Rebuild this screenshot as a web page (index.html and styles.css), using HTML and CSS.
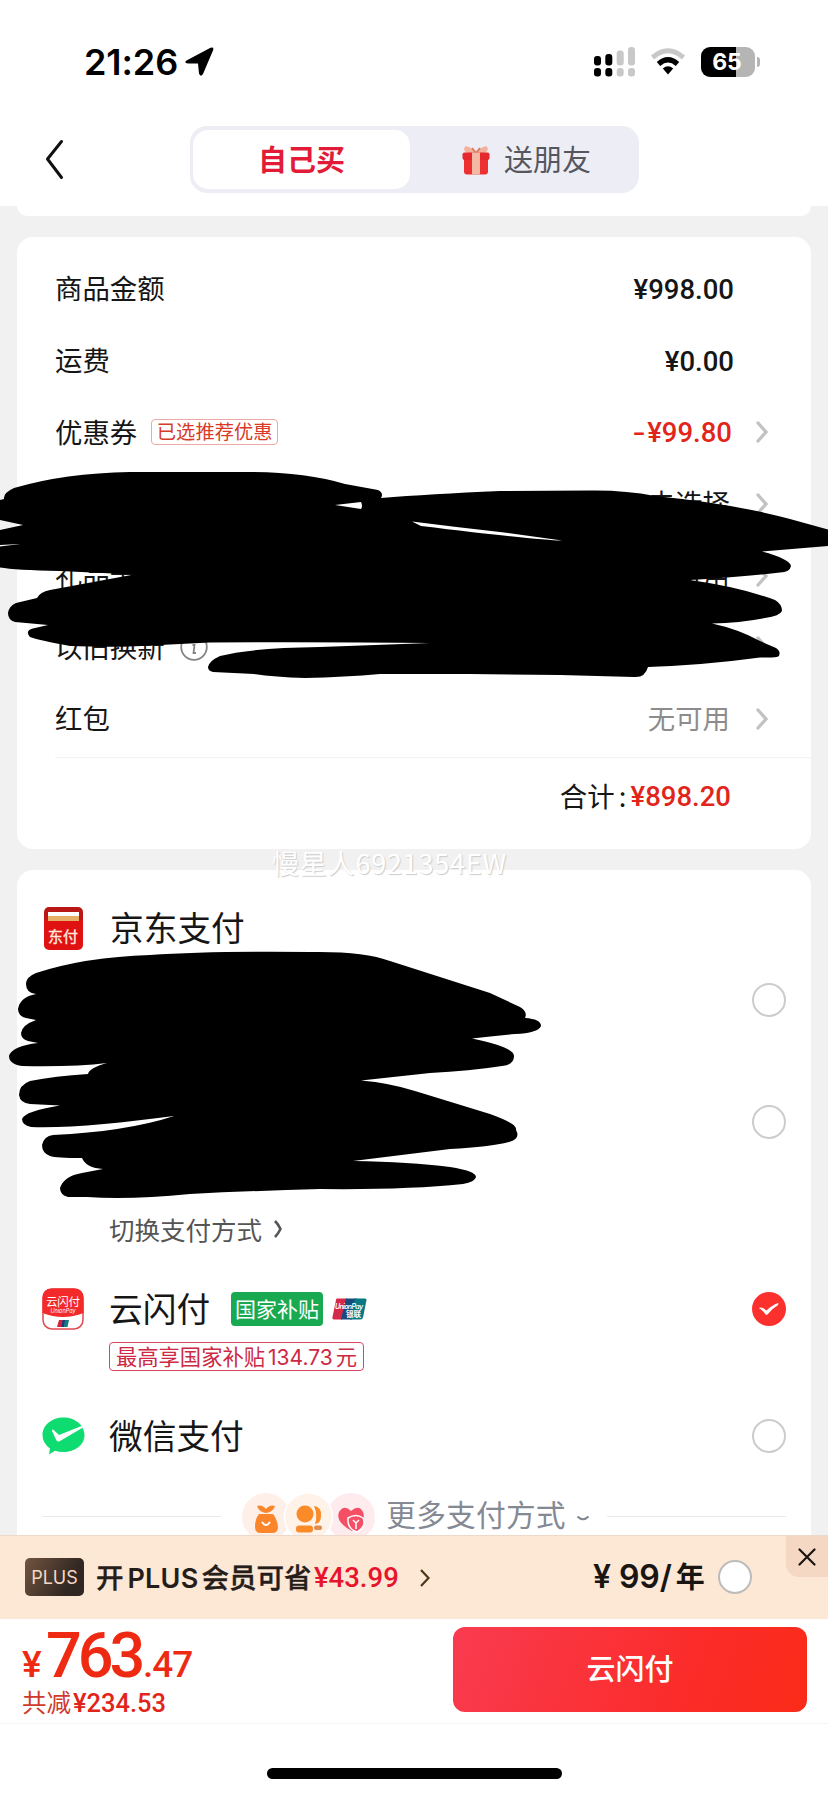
FILE: index.html
```html
<!DOCTYPE html>
<html lang="zh-CN">
<head>
<meta charset="utf-8">
<title>确认订单</title>
<link rel="stylesheet" href="styles.css">
</head>
<body>
<div class="screen">
  <header class="header">
    <div class="status">
      <span class="time">21:26</span>
      <svg class="locate" width="29" height="29" viewBox="0 0 29 29"><path d="M1.500 13.500 25.500.8Q29-.5 28.200 3L18 27Q15.500 30.500 14 26.500L13 16.500 3 16.500Q-1.500 16 1.500 13.500Z"/></svg>
      <svg class="signal" width="42" height="30" viewBox="0 0 42 30">
        <g><rect x="0" y="9" width="7" height="9.500" rx="3"/><rect x="11.300" y="7" width="7" height="11.500" rx="3"/><rect x="0" y="21" width="7" height="8.500" rx="3"/><rect x="11.300" y="21" width="7" height="8.500" rx="3"/></g>
        <g fill="#c8c8c8"><rect x="22.700" y="3.500" width="7" height="15" rx="3"/><rect x="34" y="0" width="7" height="18.500" rx="3"/><rect x="22.700" y="21" width="7" height="8.500" rx="3"/><rect x="34" y="21" width="7" height="8.500" rx="3"/></g>
      </svg>
      <svg class="wifi" width="36" height="28" viewBox="0 0 36 28">
        <path d="M2.500 9.500Q18-4 33.500 9.500" fill="none" stroke="#c8c8c8" stroke-width="5"/>
        <path d="M8.500 16Q18 7.500 27.500 16" fill="none" stroke="#000" stroke-width="5.200"/>
        <path d="M12.800 20.500Q18 16 23.200 20.500L18 26.500Z"/>
      </svg>
      <div class="battery"><span>65</span></div><i class="nub"></i>
    </div>
    <nav class="nav">
      <svg class="back" width="19" height="42" viewBox="0 0 19 42"><path d="M16.500 2.500 2.500 20 16.500 38.500" fill="none" stroke="#111" stroke-width="3" stroke-linecap="round" stroke-linejoin="round"/></svg>
      <div class="segment">
        <div class="tab tab-on"><span>自己买</span></div>
        <div class="tab">
          <svg width="28" height="30" viewBox="0 0 28 30"><path d="M13 9C2 9 0 4 4 1 7 2 12 4 14 8 16 4 21 2 24 1 28 4 26 9 15 9Z" fill="#f3b09a"/><path d="M10 3 14 8 18 3" fill="none" stroke="#d97b63" stroke-width="2"/><rect x="2" y="12" width="24" height="17.500" rx="3" fill="#ed3032"/><rect x="0.500" y="7.500" width="27" height="7.500" rx="2" fill="#e4282e"/><path d="M10 7.500h8v22h-8z" fill="#f5b9a3"/></svg>
          <span>送朋友</span>
        </div>
      </div>
    </nav>
  </header>

  <main class="content">
    <div class="card-tail"></div>
    <section class="card bill">
      <div class="row"><span>商品金额</span><b class="money">¥998.00</b></div>
      <div class="row"><span>运费</span><b class="money">¥0.00</b></div>
      <div class="row"><span>优惠券</span><em class="pick">已选推荐优惠</em><b class="money red"><span class="minus">-</span>¥99.80</b><svg class="chev" viewBox="0 0 12 22"><path d="M2 2 10 11 2 20"/></svg></div>
      <div class="row"><span class="value">去选择</span><svg class="chev" viewBox="0 0 12 22"><path d="M2 2 10 11 2 20"/></svg></div>
      <div class="row"><span>礼品卡</span><span class="value">无可用</span><svg class="chev" viewBox="0 0 12 22"><path d="M2 2 10 11 2 20"/></svg></div>
      <div class="row"><span>以旧换新</span><svg class="info" width="28" height="28" viewBox="0 0 28 28"><circle cx="14" cy="14" r="12.800"/><path d="M14 7v2M12.500 12h2l-1 8h2.500"/></svg><svg class="chev" viewBox="0 0 12 22"><path d="M2 2 10 11 2 20"/></svg></div>
      <div class="row"><span>红包</span><span class="value muted">无可用</span><svg class="chev" viewBox="0 0 12 22"><path d="M2 2 10 11 2 20"/></svg></div>
      <div class="total"><span>合计</span><span class="colon">:</span><b class="money red">¥898.20</b></div>
    </section>

    <section class="card pay">
      <div class="method m-jd">
        <div class="jd-icon"><i></i><span>东付</span></div>
        <span class="name">京东支付</span>
      </div>
      <div class="method m-a"><i class="radio"></i></div>
      <div class="method m-b"><i class="radio"></i></div>
      <div class="switch">切换支付方式<svg width="10" height="20" viewBox="0 0 10 20"><path d="M2 2Q5 5 7.500 10 5 15 2 18" fill="none" stroke="#555" stroke-width="2.600"/></svg></div>
      <div class="method m-union">
        <svg class="app" width="42" height="42" viewBox="0 0 42 42">
          <rect x="1" y="1" width="40" height="40" rx="9" fill="#fff" stroke="#e34a50" stroke-width="1.500"/>
          <path d="M.5 25V10Q.5.5 10 .500H32Q41.500.5 41.500 10V25Q21 33 .500 25Z" fill="#f22a29"/>
          <text x="21" y="17.500" text-anchor="middle" font-size="11.500" fill="#fff" textLength="34">云闪付</text>
          <text class="latin" x="21" y="25" text-anchor="middle" font-size="5.500" font-style="italic" fill="#fff">UnionPay</text>
          <path d="M17 32h4l-1 7h-5z" fill="#d8203c"/><path d="M20.500 32h3l-1 7h-3z" fill="#173d78"/><path d="M23 32h4l-1.500 7h-3.500z" fill="#147b83"/>
        </svg>
        <span class="name">云闪付</span>
        <span class="gov">国家补贴</span>
        <svg class="up" width="35" height="22" viewBox="0 0 35 22">
          <path d="M5 .5H15L10 21.500H2Q0 21.500.5 19L4 2Q4 .5 5 .500Z" fill="#d5294a"/><path d="M14 .500H25L20 21.500H9Z" fill="#184b7c"/><path d="M23 .5H33Q35 .5 34.500 2L31 19.500Q30.500 21.500 28.500 21.500H18Z" fill="#087983"/>
          <text class="latin" x="3" y="10.500" font-size="7" font-weight="600" font-style="italic" fill="#fff" textLength="28">UnionPay</text><text x="14" y="18.500" font-size="7.500" font-weight="700" fill="#fff">银联</text>
        </svg>
        <svg class="checked" width="34" height="34" viewBox="0 0 34 34"><circle cx="17" cy="17" r="17" fill="#fc302d"/><path d="M7 16Q8 15 11 16L14.500 18.500Q20 13 26 11 27 11.500 25.500 13.500 20 16.500 15.500 22.500L14 23Q11 18.500 7 16Z" fill="#fff"/></svg>
      </div>
      <div class="subsidy">最高享国家补贴<span>134.73</span>元</div>
      <div class="method m-wx">
        <svg class="app" width="43" height="38" viewBox="0 0 43 38"><path d="M21.500.5C33 .5 42.500 8 42.500 18S33 35 21.500 35Q17 35 13 33.800L7 37.500 8 31.500Q.5 26 .500 18C.5 8 10 .5 21.500.500Z" fill="#0edc70"/><path d="M11 12.500 17 18 42 8Q43 9 41 10.500L18 24Q15 25.500 14 22.500L10 14Q10 12 11 12.500Z" fill="#fff"/></svg>
        <span class="name">微信支付</span><i class="radio"></i>
      </div>
      <div class="more">
        <i class="line"></i>
        <svg class="trio" width="134" height="50" viewBox="0 0 134 50">
          <circle cx="25" cy="25" r="24" fill="#fef0e8"/>
          <circle cx="110" cy="25" r="24" fill="#fdebee"/>
          <circle cx="67.500" cy="25" r="24" fill="#fff2e8" stroke="#fff" stroke-width="1.500"/>
          <path d="M16 14q5-2 9 3 4-5 9-3-2 6-9 7-7-1-9-7ZM18 22h14q4 5 5 13 0 6-6 6H20q-6 0-6-6 0-8 4-13Z" fill="#fa852b"/><path d="M21 30q4 6 8 0" fill="none" stroke="#fff" stroke-width="2"/>
          <circle cx="64" cy="22" r="8.500" fill="#fb8a28"/><path d="M73 14q8 1 7 10 0 7-6 8 3-9-1-18Z" fill="#fb8a28"/><rect x="55" y="33.500" width="17" height="7" rx="3" fill="#fb8a28"/><rect x="73" y="33.500" width="8" height="4.500" rx="2" fill="#e48b50"/>
          <path d="M111 39Q94 30 98 20 103 12 110 19 118 12 122 20 126 30 111 39Z" fill="#f54f66"/><path d="M107 26q8-5 15 0 4 8-6 14-10-3-9-14Z" fill="#f54f66" stroke="#fff" stroke-width="1.500"/><path d="m112 28 3 3 3-3M115 31v6" fill="none" stroke="#fff" stroke-width="1.500"/>
        </svg>
        <span class="more-text">更多支付方式</span>
        <svg class="down" width="14" height="8" viewBox="0 0 14 8"><path d="M1.500 1.500Q7 7 12.500 1.500" fill="none" stroke="#858993" stroke-width="2.200"/></svg>
        <i class="line"></i>
      </div>
    </section>
  </main>

  <footer class="footer">
    <div class="plus">
      <span class="plus-badge">PLUS</span>
      <span class="plus-text">开<span>PLUS</span>会员可省</span><b class="save">¥43.99</b>
      <svg class="plus-chev" width="12" height="20" viewBox="0 0 12 20"><path d="M2 2 9.500 10 2 18" fill="none" stroke="#513719" stroke-width="2.200"/></svg>
      <span class="year">¥ 99/<span>年</span></span><i class="radio"></i>
      <div class="close"><svg width="18" height="18" viewBox="0 0 18 18"><path d="M1.500 1.500 16.500 16.500M16.500 1.500 1.500 16.500" stroke="#1b1511" stroke-width="2.200" stroke-linecap="round"/></svg></div>
    </div>
    <div class="checkout">
      <div class="sum">
        <div class="price"><small class="yen">¥</small><b>763</b><small class="cents">.47</small></div>
        <div class="saved">共减<b>¥234.53</b></div>
      </div>
      <button class="submit">云闪付</button>
    </div>
    <div class="home"><i></i></div>
  </footer>

  <div class="watermark">慢星人6921354EW</div>
  <svg class="ink" width="828" height="1796" viewBox="0 0 828 1796">
    <path d="M0 500 4 499Q3 493 14 488Q65 473 130 472H250Q305 472 345 484L378 490Q384 493 381 498Q430 494 500 491L590 490.500Q625 490 655 496Q735 504 790 519L828 529.500V546L762 551.500Q790 559 791 566Q790 572 780 572.500Q745 577 690 580Q740 587 775 600Q782 604 782 611Q780 616 765 618Q740 623 712 623.500Q738 629 760 641L776 648Q781 651 779 656Q777 658 760 657.500Q705 665 648 667Q645 678 634 677L560 675 470 674H380Q345 677 305 678Q275 677 254 674L213 672Q208 671 208 667Q209 661 220 656Q250 648 320 647L430 643Q330 642 210 642.500L160 645Q120 648 70 646Q38 640 30 637Q24 630 35 628L48 625 15 622Q8 620 8 613Q9 606 16 603L37 598Q40 592 50 590L134 574.500 60 571Q15 570 0 567.500V546.500L20 544 0 545V530L23 525 0 520Z"/>
    <path d="M26 984Q26 977 36 973Q85 957 150 955Q210 951 310 952Q363 951 390 961Q440 977 490 993L520 1007Q528 1012 525 1018Q541 1019 541 1026Q538 1033 515 1034Q492 1036 472 1038.500Q514 1047 514 1056Q514 1065 502 1066Q470 1071 430 1073L361 1080.500Q390 1083 415 1091L490 1114Q518 1124 516 1130Q521 1139 509 1142Q490 1147 450 1149L353 1161Q410 1162 450 1167Q476 1171 476 1177Q475 1182 463 1184Q405 1190 320 1189Q250 1191 190 1194 130 1200 87 1197H68Q60 1195 60 1188Q64 1176 82 1173L103 1169Q86 1168 82 1158Q56 1158 50 1156 42 1153 42 1145Q44 1136 53 1135Q90 1133 117 1129Q150 1124 174 1116Q135 1121 104 1124Q60 1128 31 1127 22 1125 22 1119Q25 1111 60 1105.500L30 1104Q20 1103 19 1095Q19 1085 30 1081Q55 1076 88 1074Q89 1068 107 1063Q75 1067 22 1066 9 1064 9 1056Q12 1046 38 1043L28 1041Q21 1039 21 1033Q22 1025 36 1020L26 1018Q18 1016 18 1009Q20 997 36 994Q26 993 26 984Z"/>
    <g fill="#fff"><path d="M335 505 361 502Q363 506 361 509Z"/><path d="M412 521.500Q455 527 500 532L562 540.500Q545 541 421 526Z"/></g>
  </svg>
</div>
</body>
</html>
```
FILE: styles.css
```css
* { box-sizing: border-box; }
body { margin: 0; background: #fff; font-family: "Liberation Sans", "Noto Sans CJK SC", sans-serif; color: #161616; }
i, em { font-style: normal; }
svg { display: block; flex: none; }
.latin { font-family: Inter, sans-serif; }
.screen { position: relative; display: flex; flex-direction: column; width: 828px; height: 1796px; overflow: hidden; font-family: "Noto Sans CJK SC", sans-serif; white-space: nowrap; }

.header { height: 206px; flex: none; background: #fff; }
.status { display: flex; align-items: center; height: 123px; padding-left: 84px; }
.time { width: 94px; font: 600 36px/40px Inter, sans-serif; letter-spacing: -.1px; color: #000; }
.locate { margin-left: 7px; }
.signal { margin-left: 380px; }
.wifi { margin-left: 14px; }
.battery { width: 54px; height: 30px; margin-left: 15px; border-radius: 9px; background: linear-gradient(90deg, #000 65%, #b5b5b5 65%); color: #fff; font: 700 23px/30px Inter, sans-serif; text-align: center; padding-right: 2px; }
.nub { width: 3px; height: 10px; margin-left: 2px; border-radius: 0 3px 3px 0; background: #b5b5b5; }
.nav { display: flex; align-items: flex-start; padding: 3px 0 0 45px; }
.back { margin-top: 13px; }
.segment { display: flex; width: 449px; height: 67px; margin-left: 126px; padding: 4px 3px; border-radius: 17px; background: #ededf5; }
.tab { display: flex; align-items: center; justify-content: center; gap: 14px; flex: 1; font-size: 29px; color: #55565e; padding-left: 7px; }
.tab span { padding-bottom: 4px; }
.tab-on { flex: none; width: 217px; border-radius: 15px; background: #fff; color: #e11b38; font-weight: 700; padding: 0; }

.content { flex: 1; min-height: 0; overflow: hidden; background: #f1f1f1; padding: 0 17px; }
.card-tail { height: 10px; background: #fff; border-radius: 0 0 14px 14px; }
.card { background: #fff; border-radius: 16px; margin-top: 21px; }
.bill { height: 612px; padding-top: 16px; }
.row { display: flex; align-items: center; height: 71.700px; padding: 0 43px 0 38px; font-size: 27.400px; }
.row > span { padding-bottom: 3px; }
.money { font: 500 27.500px/36px Roboto, sans-serif; color: #161616; margin-left: auto; margin-right: 34px; padding-top: 2px; }
.money:has(+ .chev) { margin-right: -2px; }
.minus { display: inline-block; transform: scaleX(1.350); transform-origin: right; margin-right: 2px; }
.red { color: #e1251b; }
.value { margin-left: auto; }
.muted { color: #8c8c8c; }
.chev { width: 12px; height: 22px; margin-left: 26px; fill: none; stroke: #c2c2c2; stroke-width: 3.300; stroke-linecap: round; }
.row > .info + .chev { margin-left: auto; }
.info { margin-left: 15px; fill: none; stroke: #858585; stroke-width: 1.800; }
.pick { width: 127px; height: 26px; margin-left: 14px; border: 1.500px solid #eca9a5; border-radius: 4px; color: #d93a27; font-size: 19.300px; line-height: 22px; text-align: center; }
.total { display: flex; align-items: center; height: 78px; margin: 2px 0 0 38px; border-top: 1.500px solid #f3f3f3; font-size: 27.400px; justify-content: flex-end; }
.total > span { padding-bottom: 3px; }
.colon { width: 16px; text-align: center; }
.total .money { margin: 0 80px 0 0; }

.pay { height: 680px; padding: 12px 25px 0; }
.method { display: flex; align-items: center; }
.name { margin-left: 25px; padding-bottom: 4px; font-size: 33.700px; }
.m-jd { height: 92px; }
.m-jd .name { margin-left: 27px; }
.m-a { height: 52px; }
.m-b { height: 191px; }
.m-union { height: 66px; margin-top: 35px; }
.m-wx { height: 130px; }
.m-wx .name { margin-left: 24px; }
.radio { width: 34px; height: 34px; flex: none; margin-left: auto; border: 2px solid #ccc; border-radius: 50%; background: #fff; }
.jd-icon { width: 39px; height: 43px; margin-left: 2px; padding: 5px 4px 0; border-radius: 5px; background: linear-gradient(#bb1717 0 28%, #df1111 30%); color: #ffe9df; font-size: 15px; line-height: 30px; text-align: center; -webkit-text-stroke: .4px; }
.jd-icon i { display: block; height: 9px; background: linear-gradient(#fff 50%, #e7ae67 50%); }
.jd-icon span { margin-left: -1px; }
.switch { display: flex; align-items: center; gap: 11px; height: 24px; padding-left: 67px; font-size: 25.500px; line-height: 22px; color: #555; }
.gov { width: 92px; height: 34px; margin-left: 21px; border-radius: 4px; background: #18a951; color: #fff; font-size: 21px; line-height: 32px; text-align: center; }
.up { margin-left: 9px; }
.checked { margin-left: auto; }
.subsidy { width: 255px; height: 29px; margin-left: 67px; border: 1.500px solid #d8475f; border-radius: 4px; color: #cd2944; font-size: 21.300px; line-height: 25px; text-align: center; }
.subsidy span { font-family: Inter, sans-serif; font-size: 21px; margin: 0 3px; }
.more { display: flex; align-items: center; height: 30px; }
.line { flex: 1; height: 1px; background: #eaeaea; }
.trio { margin: 2px 11px 0 20px; }
.more-text { font-size: 29.700px; color: #858993; letter-spacing: .2px; padding-bottom: 5px; }
.down { margin: 5px 17px 0 10px; }

.footer { height: 261px; flex: none; background: #fff; }
.plus { position: relative; display: flex; align-items: center; height: 84px; padding-left: 25px; background: #fde7d5; border-top: 1px solid #ecd9ca; }
.plus-badge { width: 59px; height: 38px; margin-bottom: 2px; border-radius: 5px; background: linear-gradient(120deg, #72543f, #302622 75%); color: #f3d8c6; font: 18px/39px Inter, sans-serif; text-align: center; }
.plus-text { width: 217px; margin-left: 12px; padding-bottom: 3px; font-size: 27.500px; font-weight: 500; -webkit-text-stroke: .4px; color: #251d19; }
.plus-text span { font: 600 27px/36px Inter, sans-serif; -webkit-text-stroke: 0; margin: 0 3px 0 4px; letter-spacing: .2px; }
.save { width: 86px; margin-left: 1px; font: 500 27.500px/36px Roboto, sans-serif; color: #e8142c; }
.plus-chev { margin-left: 19px; }
.year { width: 116px; margin-left: 162px; padding-bottom: 3px; font: 600 32px/40px Inter, sans-serif; color: #191512; letter-spacing: -.1px; }
.year span { font: 700 29px/40px "Noto Sans CJK SC", sans-serif; margin-left: 4px; }
.plus .radio { margin: 0 0 2px 9px; border-color: #bcbcbc; }
.close { position: absolute; top: 0; right: 0; width: 42px; height: 41px; display: flex; align-items: center; justify-content: center; border-bottom-left-radius: 13px; background: #f5d8c3; }
.checkout { display: flex; justify-content: space-between; height: 105px; padding: 8px 21px 0 22px; border-bottom: 1px solid #f4f4f4; }
.price { display: flex; align-items: baseline; height: 57px; line-height: 57px; font-family: Roboto, sans-serif; color: #ee2b12; }
.price b { width: 96px; font-size: 63px; font-weight: 500; letter-spacing: -4px; }
.yen, .cents { font-size: 37px; font-weight: 500; }
.yen { width: 24px; }
.cents { letter-spacing: -1px; margin-left: 1px; }
.saved { font-size: 24.500px; line-height: 36px; color: #cf3a2d; }
.saved b { font: 500 25.500px/36px Roboto, sans-serif; color: #e1251b; margin-left: 2px; }
.submit { width: 354px; height: 85px; padding: 0 0 5px; border: 0; border-radius: 12px; background: linear-gradient(110deg, #f93b50, #fb2c2a 65%, #fb2b18); color: #fff; font: 500 29px "Noto Sans CJK SC", sans-serif; }
.home { display: flex; justify-content: center; padding-top: 44px; }
.home i { width: 295px; height: 11px; border-radius: 6px; background: #000; }

.watermark { position: absolute; left: 272px; top: 844px; font-size: 27px; line-height: 38px; letter-spacing: .8px; color: #fff; text-shadow: 1px 1px 1px #ccc; }
.ink { position: absolute; left: 0; top: 0; pointer-events: none; }
```
